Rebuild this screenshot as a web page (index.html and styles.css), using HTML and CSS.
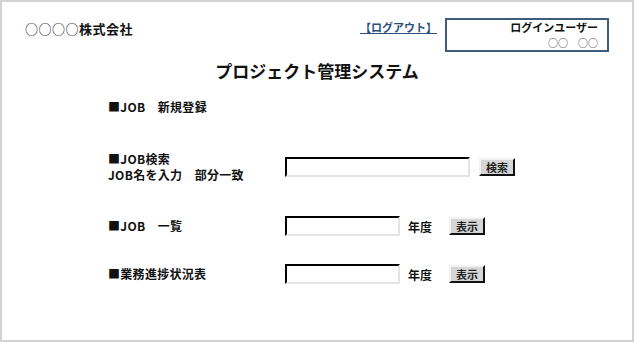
FILE: index.html
```html
<!DOCTYPE html>
<html lang="ja">
<head>
  <meta charset="UTF-8" />
  <meta name="viewport" content="width=device-width, initial-scale=1.0" />
  <title>プロジェクト管理システム</title>
  <link rel="stylesheet" href="styles.css">
</head>
<body>
  <div class="pagina">
    <div class="cabecera">
      <div class="empresa"><span class="circulos">○○○○</span>株式会社</div>
      <a class="salir" href="#">【ログアウト】</a>
      <div class="usuario">
        <div class="usuario-titulo">ログインユーザー</div>
        <div class="usuario-nombre">○○　○○</div>
      </div>
    </div>

    <h1>プロジェクト管理システム</h1>

    <div class="menu">
      <div class="fila fila-alta1">
        <div class="etiqueta">■JOB　新規登録</div>
      </div>

      <div class="fila fila-doble">
        <div class="etiqueta">■JOB検索<br>JOB名を入力　部分一致</div>
        <input type="text" class="campo campo-largo" />
        <button class="boton">検索</button>
      </div>

      <div class="fila fila-3">
        <div class="etiqueta">■JOB　一覧</div>
        <input type="text" class="campo" />
        <span class="anio">年度</span>
        <button class="boton boton-ancho">表示</button>
      </div>

      <div class="fila fila-4">
        <div class="etiqueta">■業務進捗状況表</div>
        <input type="text" class="campo" />
        <span class="anio">年度</span>
        <button class="boton boton-ancho">表示</button>
      </div>
    </div>
  </div>
</body>
</html>
```

FILE: styles.css
```css
:root {
  --texto: #111111;
  --borde-pagina: #d2d2d2;
  --borde-usuario: #3f5b7f;
  --enlace: #2b4f7c;
  --boton-fondo: #d6d6d6;
}

* {
  box-sizing: border-box;
}

body {
  margin: 0;
  font-family: "Noto Sans CJK JP", sans-serif;
  color: var(--texto);
  background: #ffffff;
}

.pagina {
  width: 634px;
  height: 342px;
  border: 2px solid var(--borde-pagina);
}

.cabecera {
  display: flex;
  align-items: flex-start;
  padding: 16px 23px 0 23px;
}

.empresa {
  font-size: 13px;
  font-weight: 700;
  line-height: 18px;
  margin-top: 2px;
  letter-spacing: 0.5px;
}

.circulos {
  font-weight: 400;
}

.salir {
  margin-left: auto;
  margin-right: 8px;
  font-size: 11px;
  line-height: 14px;
  margin-top: 2px;
  color: var(--enlace);
  font-weight: 700;
  text-decoration: underline;
}

.usuario {
  width: 164px;
  height: 34px;
  border: 2px solid var(--borde-usuario);
  padding: 0 9px 0 0;
  text-align: right;
}

.usuario-titulo {
  font-size: 11px;
  line-height: 15.5px;
  font-weight: 700;
}

.usuario-nombre {
  color: #333333;
  font-size: 10px;
  line-height: 14.5px;
}

h1 {
  margin: 7px 0 0 0;
  font-size: 17px;
  line-height: 24px;
  font-weight: 700;
  text-align: center;
}

.menu {
  padding-left: 106px;
}

.fila {
  display: flex;
  align-items: center;
  height: 20px;
}

.fila-alta1 {
  margin-top: 14px;
}

.fila-doble {
  margin-top: 30px;
  height: 40px;
}

.fila-3 {
  margin-top: 29px;
}

.fila-4 {
  margin-top: 28px;
}

.etiqueta {
  width: 177px;
  font-size: 12px;
  font-weight: 700;
  line-height: 16px;
  letter-spacing: 0.3px;
}

.campo {
  width: 115px;
  height: 20px;
  margin: 0;
  padding: 0 3px;
  border: 2px inset #e4e4e4;
  border-top-color: #4a4a4a;
  border-left-color: #4a4a4a;
  background: #ffffff;
  font-size: 12px;
}

.campo-largo {
  width: 185px;
}

.boton {
  height: 18px;
  width: 36px;
  margin: 0 0 0 9px;
  padding: 0;
  border: 2px solid;
  border-color: #f2f2f2 #111111 #111111 #f2f2f2;
  background: var(--boton-fondo);
  font-family: "Noto Sans CJK JP", sans-serif;
  font-size: 11px;
  font-weight: 700;
  line-height: 14px;
  color: #222222;
}

.boton-ancho {
  margin-left: 17px;
}

.anio {
  margin-left: 8px;
  font-size: 12px;
  font-weight: 700;
}
```
